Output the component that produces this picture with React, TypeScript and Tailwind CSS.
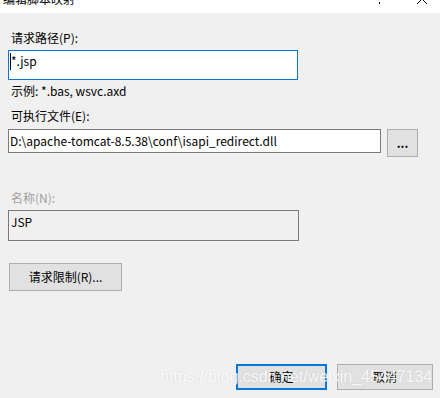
const font = "font-['Microsoft_YaHei_UI','Noto_Sans_CJK_SC',sans-serif]";

function WinButton({ children, primary, className }: { children: React.ReactNode; primary?: boolean; className: string }) {
  return (
    <div
      className={
        'flex items-center justify-center bg-[#e1e1e1] text-[12px] text-black ' +
        (primary ? 'border-2 border-[#0078d7] ' : 'border border-[#adadad] ') +
        className
      }
    >
      {children}
    </div>
  );
}

export default function App() {
  return (
    <div className={'relative h-[398px] w-[440px] overflow-hidden bg-[#f0f0f0] ' + font}>
      {/* title bar, mostly cut off */}
      <div className="relative flex h-[13px] items-end justify-between overflow-hidden bg-white">
        <span className="mb-[8px] ml-[3px] text-[12px] leading-none text-black">编辑脚本映射</span>
        <div className="flex items-end gap-[36px] pr-[12px]">
          <div className="mb-[9px] h-[2px] w-[1px] bg-black" />
          <svg width="12" height="6" viewBox="0 0 12 6" className="mb-[9px]">
            <path d="M1 6 L6 1 L11 6" stroke="#000" strokeWidth="1" fill="none" />
          </svg>
        </div>
      </div>

      <div className="flex flex-col px-[8px]">
        <div className="ml-[3px] mt-[16px] text-[12px] leading-[17px] text-black">请求路径(P):</div>
        <div className="relative mt-[4px] h-[30px] w-[290px] border border-[#0078d7] bg-white">
          <div className="absolute left-[1px] top-[2px] h-[17px] w-[1px] bg-black" />
          <span className="ml-[2px] mt-[1px] block text-[12px] leading-[17px] text-black">*.jsp</span>
        </div>
        <div className="ml-[3px] mt-[2px] text-[12px] leading-[17px] text-black">示例: *.bas, wsvc.axd</div>

        <div className="ml-[3px] mt-[8px] text-[12px] leading-[17px] text-black">可执行文件(E):</div>
        <div className="mt-[5px] flex items-start gap-[6px]">
          <div className="flex h-[24px] w-[373px] items-center border border-[#7a7a7a] bg-white pl-[1px] text-[12px] text-black">
            D:\apache-tomcat-8.5.38\conf\isapi_redirect.dll
          </div>
          <WinButton className="h-[28px] w-[31px] font-bold">...</WinButton>
        </div>

        <div className="ml-[3px] mt-[32px] text-[12px] leading-[17px] text-[#a0a0a0]">名称(N):</div>
        <div className="mt-[4px] h-[31px] w-[291px] border border-[#7a7a7a] bg-[#f0f0f0] pl-[2px] pt-[2px] text-[12px] leading-[17px] text-black">
          JSP
        </div>

        <WinButton className="ml-[1px] mt-[22px] h-[28px] w-[113px]">请求限制(R)...</WinButton>

        <div className="mt-[73px] flex justify-end gap-[10px]">
          <WinButton primary className="h-[26px] w-[91px]">确定</WinButton>
          <WinButton className="mr-[-1px] h-[26px] w-[96px]">取消</WinButton>
        </div>
      </div>

      {/* watermark */}
      <div className="pointer-events-none absolute left-[160px] top-[367px] font-['Liberation_Sans',sans-serif] text-[16px] leading-[20px] text-white/85 [text-shadow:0_0_2px_rgba(0,0,0,0.12)]">
        https://blog.csdn.net/weixin_45447134
      </div>
    </div>
  );
}
